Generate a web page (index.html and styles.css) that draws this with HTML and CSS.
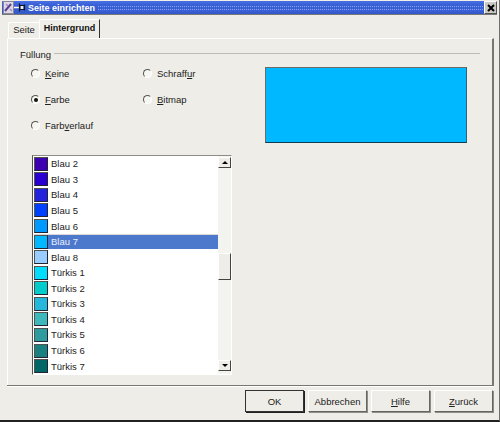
FILE: index.html
```html
<!DOCTYPE html>
<html lang="de">
<head>
    <meta charset="UTF-8">
    <title>Seite einrichten</title>
    <link rel="stylesheet" href="styles.css">
</head>
<body>
<div class="window">
    <div class="titlebar">
        <svg class="app-icon" width="11" height="13" viewBox="0 0 11 13">
            <rect x="0.5" y="0.5" width="10" height="12" fill="#dcd8e6" stroke="#8a8698"/>
            <path d="M2 10 L8 3" stroke="#5a3f8f" stroke-width="2" fill="none"/>
            <path d="M3 3 L5 5 M7 8 L9 10" stroke="#a08cc0" stroke-width="1.5" fill="none"/>
        </svg>
        <svg class="pin-icon" width="12" height="9" viewBox="0 0 12 9">
            <path d="M0 4.5 H5" stroke="#ffffff" stroke-width="1.5"/>
            <path d="M6 2.5 H10 V6.5 H6 Z" fill="#e8ecf8" stroke="#0c1428"/>
            <path d="M5.5 0.5 V8.5 M10.5 1.5 V7.5" stroke="#0c1428" stroke-width="1.2"/>
        </svg>
        <span class="title-text">Seite einrichten</span>
        <div class="title-fill"></div>
        <div class="close-btn">
            <svg width="8" height="8" viewBox="0 0 8 8">
                <path d="M1 1 L7 7 M7 1 L1 7" stroke="#000" stroke-width="2"/>
            </svg>
        </div>
    </div>

    <div class="content">
        <div class="tabs">
            <div class="tab">Seite</div>
            <div class="tab active">Hintergrund</div>
        </div>
        <div class="panel">
            <div class="legend">
                <span>Füllung</span>
                <div class="legend-line"></div>
            </div>

            <div class="fill-top">
                <div class="radios">
                    <label class="radio-item"><span class="radio"></span><span><u>K</u>eine</span></label>
                    <label class="radio-item"><span class="radio"></span><span>Schraff<u>u</u>r</span></label>
                    <label class="radio-item"><span class="radio checked"></span><span><u>F</u>arbe</span></label>
                    <label class="radio-item"><span class="radio"></span><span><u>B</u>itmap</span></label>
                    <label class="radio-item"><span class="radio"></span><span>Farb<u>v</u>erlauf</span></label>
                </div>
                <div class="preview"></div>
            </div>

            <div class="listbox">
                <div class="rows">
                    <div class="row"><span class="swatch blau2"></span>Blau 2</div>
                    <div class="row"><span class="swatch blau3"></span>Blau 3</div>
                    <div class="row"><span class="swatch blau4"></span>Blau 4</div>
                    <div class="row"><span class="swatch blau5"></span>Blau 5</div>
                    <div class="row"><span class="swatch blau6"></span>Blau 6</div>
                    <div class="row selected"><span class="swatch blau7"></span>Blau 7</div>
                    <div class="row"><span class="swatch blau8"></span>Blau 8</div>
                    <div class="row"><span class="swatch tuerkis1"></span>Türkis 1</div>
                    <div class="row"><span class="swatch tuerkis2"></span>Türkis 2</div>
                    <div class="row"><span class="swatch tuerkis3"></span>Türkis 3</div>
                    <div class="row"><span class="swatch tuerkis4"></span>Türkis 4</div>
                    <div class="row"><span class="swatch tuerkis5"></span>Türkis 5</div>
                    <div class="row"><span class="swatch tuerkis6"></span>Türkis 6</div>
                    <div class="row"><span class="swatch tuerkis7"></span>Türkis 7</div>
                </div>
                <div class="scrollbar">
                    <div class="sb-btn"><span class="arrow-up"></span></div>
                    <div class="sb-thumb"></div>
                    <div class="sb-btn sb-down"><span class="arrow-down"></span></div>
                </div>
            </div>
        </div>

        <div class="buttons">
            <div class="btn default">OK</div>
            <div class="btn">Abbrechen</div>
            <div class="btn"><span><u>H</u>ilfe</span></div>
            <div class="btn"><span><u>Z</u>urück</span></div>
        </div>
    </div>
</div>
</body>
</html>
```

FILE: styles.css
```css
html, body {
    margin: 0;
    padding: 0;
    background: #eeede7;
}
.window {
    width: 500px;
    height: 422px;
    box-sizing: border-box;
    padding: 1px 2px 0 2px;
    background: #eeede7;
    border-right: 1px solid #6f6f6c;
    border-bottom: 2px solid #222;
    font-family: "Liberation Sans", Arial, sans-serif;
    font-size: 9.5px;
    color: #222;
    display: flex;
    flex-direction: column;
}

/* title bar */
.titlebar {
    height: 14px;
    box-sizing: border-box;
    display: flex;
    align-items: center;
    background: linear-gradient(#4a70e6, #3a60d6 30%, #3358c8);
    border-bottom: 1px solid #77777a;
}
.app-icon {
    margin-left: 1px;
    flex: none;
}
.pin-icon {
    flex: none;
}
.title-text {
    margin-left: 2px;
    width: 70px;
    color: #fff;
    font-weight: bold;
    font-size: 9px;
    white-space: nowrap;
}
.title-fill {
    flex: 1;
    align-self: stretch;
    margin: 3px 0 2px 0;
    background:
        linear-gradient(#3a60d6 2px, transparent 2px) 0 0 / 3px 3px,
        linear-gradient(90deg, #86a4f2 1px, #3a60d6 1px) 0 0 / 2px 3px;
}
.close-btn {
    width: 13px;
    height: 13px;
    flex: none;
    box-sizing: border-box;
    margin-left: 1px;
    background: #c8c8c4;
    border: 1px solid #fff;
    border-right-color: #55554f;
    border-bottom-color: #55554f;
    display: flex;
    align-items: center;
    justify-content: center;
}

/* tabs */
.content {
    flex: 1;
    display: flex;
    flex-direction: column;
    padding: 4px 3px 0 5px;
    min-height: 0;
}
.tabs {
    display: flex;
    align-items: flex-end;
    height: 19px;
    margin-left: 1px;
}
.tab {
    height: 16px;
    width: 31px;
    box-sizing: border-box;
    padding-top: 1px;
    text-align: center;
    border: 1px solid #fff;
    border-bottom: none;
    border-right: none;
    border-radius: 2px 0 0 0;
}
.tab.active {
    height: 19px;
    width: 61px;
    font-size: 9px;
    font-weight: bold;
    color: #111;
    padding-top: 3px;
    border-right: 1px solid #33332f;
}

.panel {
    height: 347px;
    box-sizing: border-box;
    border-top: 1px solid #fff;
    border-left: 1px solid #fff;
    border-right: 2px solid #777773;
    padding: 9px 12px 0 12px;
}
.legend {
    display: flex;
    align-items: center;
    height: 12px;
}
.legend-line {
    flex: 1;
    height: 1px;
    margin-left: 3px;
    margin-top: -2px;
    background: #bcbbb6;
}
.fill-top {
    display: flex;
    margin-top: -1px;
}
.radios {
    width: 234px;
    margin-left: 11px;
    padding-top: 9px;
    display: grid;
    grid-template-columns: 112px 1fr;
    grid-auto-rows: 26px;
    flex: none;
}
.radio-item {
    display: flex;
    align-items: flex-start;
    line-height: 12px;
}
.radio {
    width: 9px;
    height: 9px;
    box-sizing: border-box;
    margin-right: 5px;
    margin-top: 1px;
    border-radius: 50%;
    background: #f6f6f2;
    border: 1px solid #fff;
    border-top-color: #55554f;
    border-left-color: #55554f;
    flex: none;
    position: relative;
}
.radio.checked::after {
    content: "";
    position: absolute;
    left: 1.5px;
    top: 1.5px;
    width: 4px;
    height: 4px;
    border-radius: 50%;
    background: #111;
}
.preview {
    width: 202px;
    height: 76px;
    box-sizing: border-box;
    margin-top: 8px;
    background: #00b8ff;
    border: 1px solid #6c6c68;
    border-right-color: #2a6678;
    border-bottom-color: #0d3c50;
    flex: none;
}

/* colour list */
.listbox {
    width: 200px;
    height: 220px;
    box-sizing: border-box;
    margin-top: 9px;
    margin-left: 12px;
    display: flex;
    background: #fff;
    border: 1px solid #fff;
    border-top-color: #8d8d88;
    border-left: 1px solid #55554f;
}
.rows {
    flex: 1;
    overflow: hidden;
    padding-left: 1px;
}
.row {
    height: 15.57px;
    display: flex;
    align-items: center;
    font-size: 9.5px;
}
.row.selected {
    background: #4d79cc;
    color: #e8eeff;
    box-shadow: inset 0 1px 0 #d8d8d4;
}
.swatch {
    width: 14px;
    height: 14px;
    box-sizing: border-box;
    margin-right: 3px;
    border: 1px solid #52524e;
    border-right-color: #223;
    border-bottom-color: #223;
    flex: none;
}
.blau2 { background: #3c00b0; }
.blau3 { background: #2a00d2; }
.blau4 { background: #2222dd; }
.blau5 { background: #0040ff; }
.blau6 { background: #0099ff; }
.blau7 { background: #00b8ff; }
.blau8 { background: #99ccff; }
.tuerkis1 { background: #00ddff; }
.tuerkis2 { background: #00cccc; }
.tuerkis3 { background: #23b8dc; }
.tuerkis4 { background: #3fb8bc; }
.tuerkis5 { background: #2e9c9e; }
.tuerkis6 { background: #1a8080; }
.tuerkis7 { background: #006666; }

.scrollbar {
    width: 13px;
    flex: none;
    display: flex;
    flex-direction: column;
    background: #f3f3f0;
    padding-top: 1px;
    padding-bottom: 3px;
}
.sb-btn {
    height: 11px;
    box-sizing: border-box;
    background: #eeede7;
    border: 1px solid #fff;
    border-right-color: #44443f;
    border-bottom-color: #44443f;
    display: flex;
    align-items: center;
    justify-content: center;
}
.sb-down {
    margin-top: auto;
}
.sb-thumb {
    height: 27px;
    margin-top: 85px;
    box-sizing: border-box;
    background: #eeede7;
    border: 1px solid #fff;
    border-right-color: #44443f;
    border-bottom-color: #44443f;
}
.arrow-up {
    border-left: 3px solid transparent;
    border-right: 3px solid transparent;
    border-bottom: 3px solid #000;
}
.arrow-down {
    border-left: 3px solid transparent;
    border-right: 3px solid transparent;
    border-top: 3px solid #000;
}

/* bottom buttons */
.buttons {
    border-top: 1px solid #77776f;
    box-shadow: inset 0 1px 0 #fff;
    flex: 1;
    display: flex;
    justify-content: flex-end;
    gap: 4px;
    padding-top: 4px;
    padding-right: 1px;
    align-items: flex-start;
}
.btn {
    width: 59px;
    height: 22px;
    box-sizing: border-box;
    display: flex;
    align-items: center;
    justify-content: center;
    background: #eeede7;
    border: 1px solid #fff;
    border-right-color: #666661;
    border-bottom-color: #666661;
    box-shadow: 1px 1px 0 #8e8e88;
}
.btn.default {
    border: 1px solid #333;
    box-shadow: 1px 1px 0 #222;
}
```
